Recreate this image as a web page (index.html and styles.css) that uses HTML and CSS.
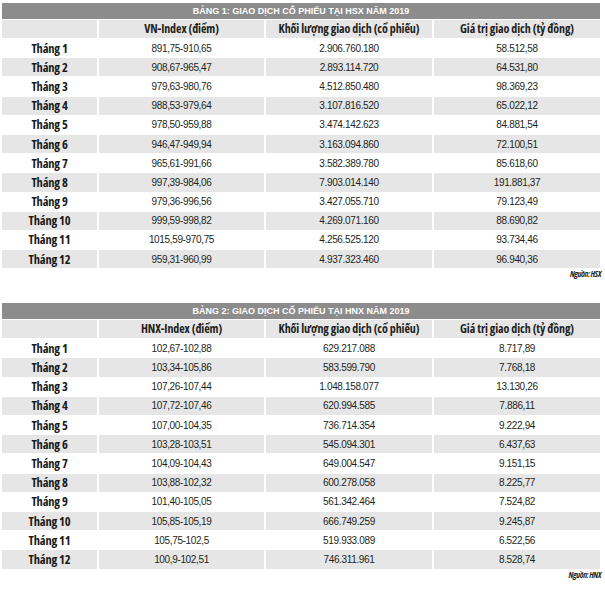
FILE: index.html
```html
<!DOCTYPE html>
<html lang="vi">
<head>
<meta charset="utf-8">
<title>Giao dịch cổ phiếu 2019</title>
<link rel="stylesheet" href="styles.css">
</head>
<body>
<div class="page">
  <table class="tbl">
    <colgroup><col class="c1"><col class="c2"><col class="c3"><col class="c4"></colgroup>
    <thead>
      <tr class="title-row"><th colspan="4">BẢNG 1: GIAO DỊCH CỔ PHIẾU TẠI HSX NĂM 2019</th></tr>
      <tr class="head-row"><th></th><th>VN-Index (điểm)</th><th>Khối lượng giao dịch (cổ phiếu)</th><th>Giá trị giao dịch (tỷ đồng)</th></tr>
    </thead>
    <tbody>
      <tr><th>Tháng 1</th><td>891,75-910,65</td><td>2.906.760.180</td><td>58.512,58</td></tr>
      <tr><th>Tháng 2</th><td>908,67-965,47</td><td>2.893.114.720</td><td>64.531,80</td></tr>
      <tr><th>Tháng 3</th><td>979,63-980,76</td><td>4.512.850.480</td><td>98.369,23</td></tr>
      <tr><th>Tháng 4</th><td>988,53-979,64</td><td>3.107.816.520</td><td>65.022,12</td></tr>
      <tr><th>Tháng 5</th><td>978,50-959,88</td><td>3.474.142.623</td><td>84.881,54</td></tr>
      <tr><th>Tháng 6</th><td>946,47-949,94</td><td>3.163.094.860</td><td>72.100,51</td></tr>
      <tr><th>Tháng 7</th><td>965,61-991,66</td><td>3.582.389.780</td><td>85.618,60</td></tr>
      <tr><th>Tháng 8</th><td>997,39-984,06</td><td>7.903.014.140</td><td>191.881,37</td></tr>
      <tr><th>Tháng 9</th><td>979,36-996,56</td><td>3.427.055.710</td><td>79.123,49</td></tr>
      <tr><th>Tháng 10</th><td>999,59-998,82</td><td>4.269.071.160</td><td>88.690,82</td></tr>
      <tr><th>Tháng 11</th><td>1015,59-970,75</td><td>4.256.525.120</td><td>93.734,46</td></tr>
      <tr><th>Tháng 12</th><td>959,31-960,99</td><td>4.937.323.460</td><td>96.940,36</td></tr>
    </tbody>
  </table>
  <p class="src">Nguồn: HSX</p>

  <table class="tbl tbl2">
    <colgroup><col class="c1"><col class="c2"><col class="c3"><col class="c4"></colgroup>
    <thead>
      <tr class="title-row"><th colspan="4">BẢNG 2: GIAO DỊCH CỔ PHIẾU TẠI HNX NĂM 2019</th></tr>
      <tr class="head-row"><th></th><th>HNX-Index (điểm)</th><th>Khối lượng giao dịch (cổ phiếu)</th><th>Giá trị giao dịch (tỷ đồng)</th></tr>
    </thead>
    <tbody>
      <tr><th>Tháng 1</th><td>102,67-102,88</td><td>629.217.088</td><td>8.717,89</td></tr>
      <tr><th>Tháng 2</th><td>103,34-105,86</td><td>583.599.790</td><td>7.768,18</td></tr>
      <tr><th>Tháng 3</th><td>107,26-107,44</td><td>1.048.158.077</td><td>13.130,26</td></tr>
      <tr><th>Tháng 4</th><td>107,72-107,46</td><td>620.994.585</td><td>7.886,11</td></tr>
      <tr><th>Tháng 5</th><td>107,00-104,35</td><td>736.714.354</td><td>9.222,94</td></tr>
      <tr><th>Tháng 6</th><td>103,28-103,51</td><td>545.094.301</td><td>6.437,63</td></tr>
      <tr><th>Tháng 7</th><td>104,09-104,43</td><td>649.004.547</td><td>9.151,15</td></tr>
      <tr><th>Tháng 8</th><td>103,88-102,32</td><td>600.278.058</td><td>8.225,77</td></tr>
      <tr><th>Tháng 9</th><td>101,40-105,05</td><td>561.342.464</td><td>7.524,82</td></tr>
      <tr><th>Tháng 10</th><td>105,85-105,19</td><td>666.749.259</td><td>9.245,87</td></tr>
      <tr><th>Tháng 11</th><td>105,75-102,5</td><td>519.933.089</td><td>6.522,56</td></tr>
      <tr><th>Tháng 12</th><td>100,9-102,51</td><td>746.311.961</td><td>8.528,74</td></tr>
    </tbody>
  </table>
  <p class="src">Nguồn: HNX</p>
</div>
</body>
</html>
```

FILE: styles.css
```css
html, body {
  margin: 0;
  padding: 0;
  background: #ffffff;
}

.page {
  width: 605px;
  padding-top: 2px;
  font-family: "Liberation Sans", Arial, sans-serif;
  color: #231f20;
}

.tbl {
  border-collapse: separate;
  border-spacing: 2px 1px;
  table-layout: fixed;
  width: 602px;
}

.c1 { width: 95px; }
.c2 { width: 165px; }
.c3 { width: 166px; }
.c4 { width: 166px; }

.tbl th,
.tbl td {
  padding: 0;
  text-align: center;
  vertical-align: middle;
  white-space: nowrap;
}

.title-row th {
  height: 16px;
  background: #8c8c8c;
  color: #ffffff;
  font-family: "Liberation Sans", Arial, sans-serif;
  font-weight: bold;
  font-size: 9px;
  line-height: 16px;
}

.head-row th {
  height: 18px;
  background: #e6e6e6;
  font-family: "Open Sans", sans-serif;
  font-stretch: 75%;
  font-weight: 700;
  font-size: 12px;
  letter-spacing: -0.1px;
  line-height: 18px;
}

.tbl tbody tr {
  height: 18.2px;
}

.tbl tbody tr:nth-child(even) th,
.tbl tbody tr:nth-child(even) td {
  background: #e6e6e6;
}

.tbl tbody th {
  font-family: "Open Sans", sans-serif;
  font-stretch: 75%;
  font-weight: 700;
  font-size: 12.5px;
  letter-spacing: -0.2px;
  color: #1a1a1a;
}

.tbl tbody td {
  font-size: 10px;
  letter-spacing: -0.35px;
}

.src {
  margin: 0 4px 0 0;
  height: 10px;
  line-height: 10px;
  text-align: right;
  font-family: "Open Sans", sans-serif;
  font-stretch: 75%;
  font-style: italic;
  font-weight: 700;
  font-size: 8.5px;
  letter-spacing: -0.4px;
}

.tbl2 {
  margin-top: 23px;
}
```
